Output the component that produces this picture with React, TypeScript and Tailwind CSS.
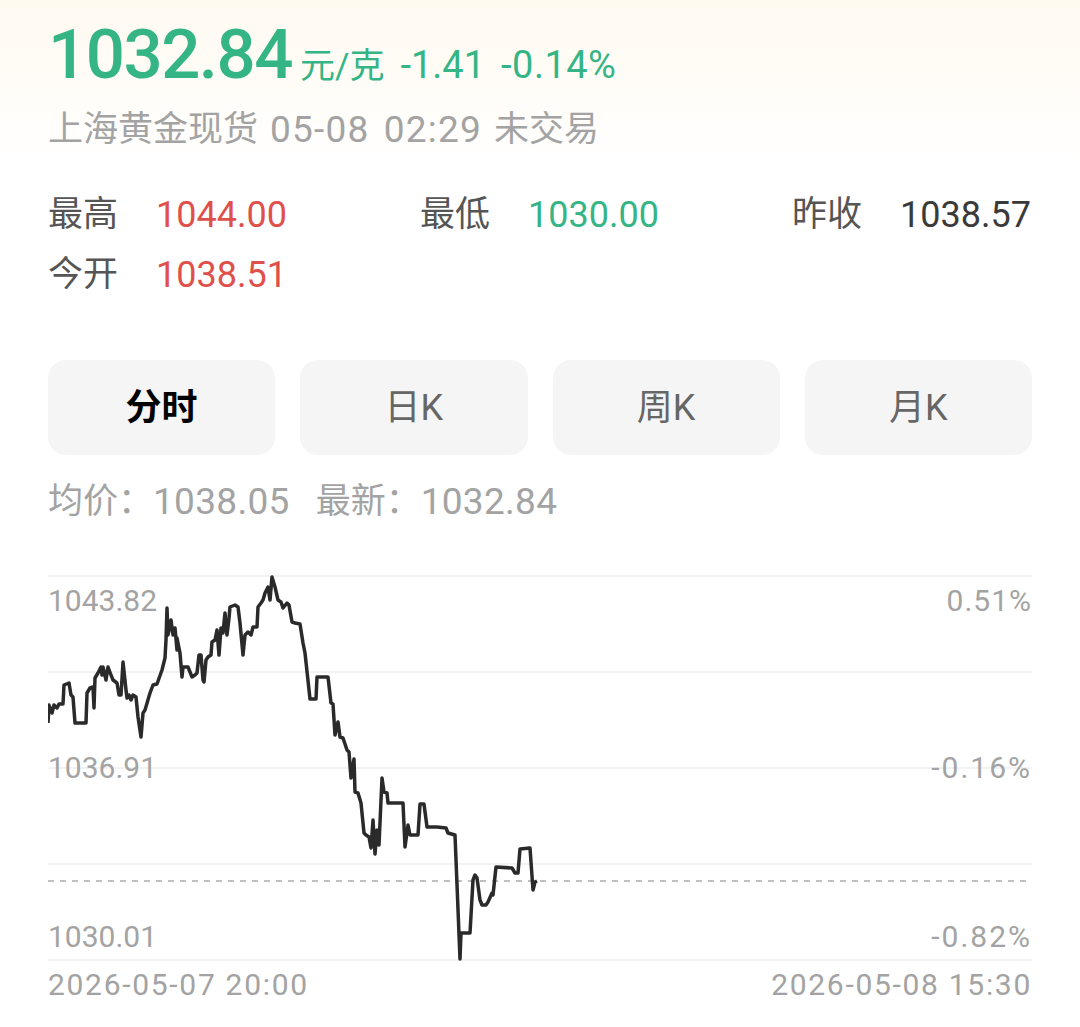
import React from 'react';

const line: [number, number][] = [
  [48, 723], [49, 705], [52, 713], [54, 705], [57, 708], [59, 704], [63, 704], [64, 685], [69, 683],
  [71, 695], [73, 697], [75, 723], [86, 723], [87, 693], [90, 688], [93, 687], [94, 708], [95, 678],
  [98, 673], [101, 667], [102, 675], [103, 667], [106, 680], [108, 667], [111, 675], [113, 680],
  [117, 683], [119, 695], [121, 695], [123, 662], [126, 690], [127, 698], [129, 695], [131, 700],
  [133, 695], [136, 697], [138, 717], [141, 737], [143, 713], [145, 710], [150, 693], [153, 685],
  [157, 684], [162, 670], [165, 658], [166, 640], [167, 608], [168, 635], [171, 620], [173, 635],
  [175, 628], [177, 650], [177, 638], [180, 653], [182, 677], [183, 667], [188, 667], [192, 677],
  [195, 675], [197, 673], [199, 655], [201, 655], [203, 680], [204, 682], [206, 660], [208, 657],
  [211, 655], [212, 642], [215, 640], [217, 630], [219, 655], [221, 628], [223, 633], [225, 613],
  [227, 635], [229, 618], [230, 607], [235, 605], [238, 607], [240, 623], [243, 655], [245, 635],
  [248, 632], [251, 635], [253, 627], [257, 627], [258, 607], [261, 603], [263, 600], [265, 593],
  [268, 587], [270, 600], [272, 577], [275, 587], [278, 600], [281, 602], [283, 608], [287, 603],
  [289, 605], [292, 622], [295, 623], [300, 624], [303, 643], [305, 653], [310, 699], [316, 699],
  [317, 677], [328, 677], [331, 703], [333, 704], [335, 735], [338, 722], [340, 737], [343, 738],
  [347, 750], [349, 752], [351, 778], [354, 759], [355, 792], [358, 793], [361, 803], [364, 833],
  [366, 835], [369, 837], [371, 848], [373, 820], [375, 854], [377, 830], [379, 845], [382, 778],
  [384, 792], [387, 793], [388, 803], [403, 803], [405, 847], [408, 825], [410, 835], [418, 835],
  [420, 804], [424, 804], [427, 827], [437, 827], [446, 828], [448, 833], [455, 835], [460, 959],
  [461, 933], [470, 933], [473, 880], [475, 875], [477, 878], [480, 900], [482, 905], [486, 905],
  [488, 902], [492, 893], [493, 895], [496, 867], [512, 868], [515, 873], [518, 873], [520, 849],
  [530, 848], [533, 890], [535, 882], [537, 881],
];

const grid = [576, 672, 768, 864, 960];

function Stat({ label, value, color }: { label: string; value: string; color: string }) {
  return (
    <div className="flex items-center gap-[38px] h-[48px] whitespace-nowrap">
      <span className="shrink-0 text-[35px] text-[#555555]">{label}</span>
      <span className={`text-[36px] ${color}`}>{value}</span>
    </div>
  );
}

export default function App() {
  const tabs = ['分时', '日K', '周K', '月K'];

  return (
    <div className="w-[1080px] h-[1027px] overflow-hidden bg-white font-[Roboto,'Noto_Sans_CJK_SC',sans-serif]">
      {/* header */}
      <div className="px-12 pt-[14px] pb-[10px] bg-gradient-to-b from-[#fffaf0] to-white">
        <div className="flex items-baseline h-[82px] text-[#35b585]">
          <span className="text-[69px] font-medium leading-[82px] tracking-[-1.5px]">1032.84</span>
          <span className="text-[35px] ml-[8px]">元/克</span>
          <span className="text-[38px] ml-[16px]">-1.41</span>
          <span className="text-[38px] ml-[16px] tracking-[0.5px]">-0.14%</span>
        </div>
        <div className="mt-[10px] flex text-[35px] leading-[48px] text-[#a3a3a3] whitespace-nowrap">
          <span>上海黄金现货</span>
          <span className="ml-[12px] text-[37px] tracking-[1.2px] [word-spacing:4px]">05-08 02:29</span>
          <span className="ml-[12px]">未交易</span>
        </div>
      </div>

      {/* stats */}
      <div className="px-12 mt-[27px]">
        <div className="grid grid-cols-[372px_372px_1fr]">
          <Stat label="最高" value="1044.00" color="text-[#e0504b]" />
          <Stat label="最低" value="1030.00" color="text-[#35b585]" />
          <Stat label="昨收" value="1038.57" color="text-[#3a3a3a]" />
        </div>
        <div className="mt-[12px]">
          <Stat label="今开" value="1038.51" color="text-[#e0504b]" />
        </div>
      </div>

      {/* tabs */}
      <div className="px-12 mt-[61px] grid grid-cols-4 gap-[25px]">
        {tabs.map((t, i) => (
          <div
            key={t}
            className={`h-[95px] rounded-[18px] bg-[#f5f5f5] flex items-center justify-center text-[36px] ${
              i === 0 ? 'font-bold text-black' : 'text-[#666666]'
            }`}
          >
            {t}
          </div>
        ))}
      </div>

      <div className="px-12 mt-[23px] flex text-[35px] leading-[48px] text-[#a3a3a3]">
        <span>均价：</span>
        <span className="text-[37px] tracking-[0.3px]">1038.05</span>
        <span className="ml-[26px]">最新：</span>
        <span className="text-[37px] tracking-[0.3px]">1032.84</span>
      </div>

      {/* chart */}
      <div className="relative mx-12 mt-[34px] h-[440px] text-[30px] text-[#a3a3a3]">
        <svg className="absolute inset-0" width="984" height="440" viewBox="48 560 984 440">
          {grid.map((y) => (
            <line key={y} x1="48" x2="1032" y1={y} y2={y} stroke="#f2f2f2" strokeWidth="2" />
          ))}
          <line x1="48" x2="1032" y1="881" y2="881" stroke="#aaaaaa" strokeWidth="1.5" strokeDasharray="6 6" />
          <polyline
            points={line.map((p) => p.join(',')).join(' ')}
            fill="none"
            stroke="#2a2a2a"
            strokeWidth="3.5"
            strokeLinejoin="round"
          />
        </svg>

        <span className="absolute left-0 top-[17px] leading-[48px]">1043.82</span>
        <span className="absolute left-0 top-[184px] leading-[48px]">1036.91</span>
        <span className="absolute left-0 top-[353px] leading-[48px]">1030.01</span>
        <span className="absolute right-0 top-[17px] leading-[48px] tracking-[1px]">0.51%</span>
        <span className="absolute right-0 top-[184px] leading-[48px] tracking-[2px]">-0.16%</span>
        <span className="absolute right-0 top-[353px] leading-[48px] tracking-[2px]">-0.82%</span>
        <div className="absolute left-0 right-0 top-[401px] flex justify-between leading-[48px] tracking-[1.7px]">
          <span>2026-05-07 20:00</span>
          <span>2026-05-08 15:30</span>
        </div>
      </div>
    </div>
  );
}
